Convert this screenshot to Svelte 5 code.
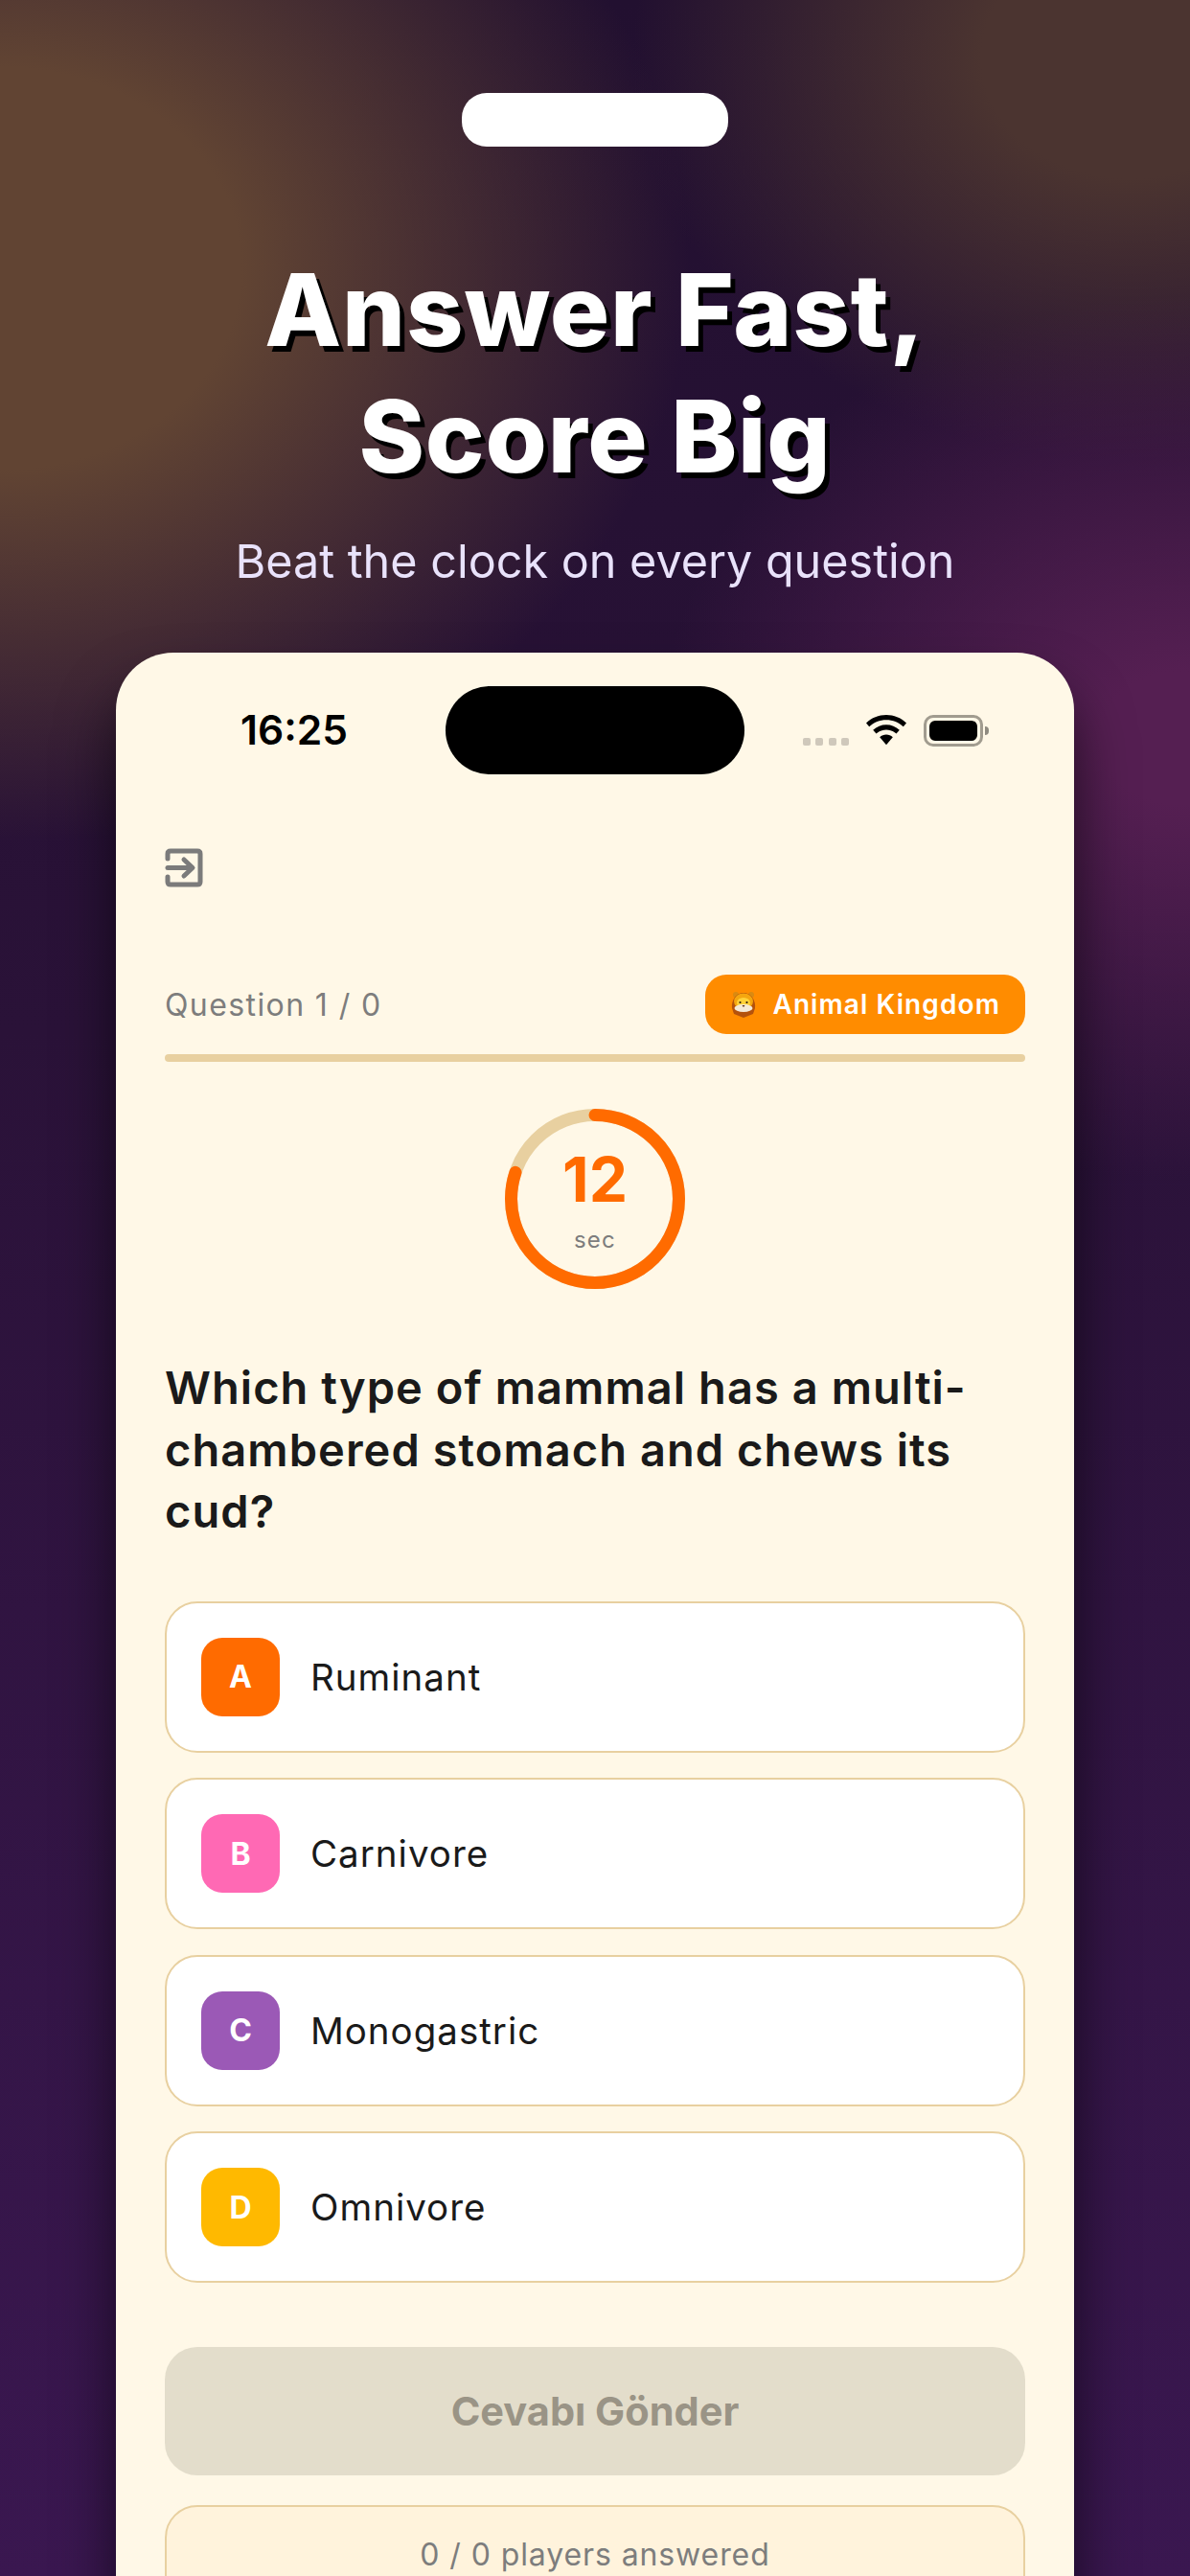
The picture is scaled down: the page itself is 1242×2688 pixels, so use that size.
<script>
  const options = [
    { letter: 'A', label: 'Ruminant', color: '#ff6b00' },
    { letter: 'B', label: 'Carnivore', color: '#ff69b4' },
    { letter: 'C', label: 'Monogastric', color: '#9b59b6' },
    { letter: 'D', label: 'Omnivore', color: '#ffb900' }
  ];

  // timer ring: 12 of 15 seconds left
  const radius = 87.5;
  const circumference = 2 * Math.PI * radius;
  const dash = (12 / 15) * circumference;
</script>

<div class="page">
  <div class="pill"></div>

  <h1 class="title">Answer Fast,<br />Score Big</h1>
  <p class="subtitle">Beat the clock on every question</p>

  <div class="phone">
    <div class="status-bar">
      <span class="time">16:25</span>
      <div class="island"></div>
      <div class="status-icons">
        <div class="signal">
          <span></span><span></span><span></span><span></span>
        </div>
        <svg class="wifi" viewBox="0 0 42 32" width="42" height="32" aria-hidden="true">
          <path d="M21 0C13 0 5.800 3 0 8.400L3.200 12.200C8 7.800 14.200 5.200 21 5.200S34 7.800 38.800 12.200L42 8.400C36.200 3 29 0 21 0Z" fill="#000" />
          <path d="M21 10.200C15.800 10.200 11 12.200 7.200 15.800L10.500 19.600C13.300 17 17 15.400 21 15.400S28.700 17 31.500 19.600L34.800 15.800C31 12.200 26.200 10.200 21 10.200Z" fill="#000" />
          <path d="M21 20.400C18.400 20.400 16 21.400 14.200 23.200L21 31.200L27.800 23.200C26 21.400 23.600 20.400 21 20.400Z" fill="#000" />
        </svg>
        <div class="battery">
          <div class="battery-body"><div class="battery-fill"></div></div>
          <div class="battery-cap"></div>
        </div>
      </div>
    </div>

    <div class="content">
      <svg class="exit" viewBox="0 0 40 41" width="40" height="41" fill="none" stroke="#7b7b7b" stroke-width="5" stroke-linecap="round" stroke-linejoin="round" aria-hidden="true">
        <path d="M3 11V6Q3 3 6 3H34Q37 3 37 6V35Q37 38 34 38H6Q3 38 3 35V30" />
        <path d="M3 20.500H27" />
        <path d="M20 12L29 20.500L20 29" />
      </svg>

      <div class="progress-head">
        <span class="progress-label">Question 1 / 0</span>
        <span class="chip">
          <svg class="lion" viewBox="0 0 26 28" width="26" height="28" aria-hidden="true">
            <circle cx="5" cy="4" r="3" fill="#d98a12" />
            <circle cx="21" cy="4" r="3" fill="#d98a12" />
            <path d="M13 28L8 26L3 24L1 18C0 10 5 2 13 2S26 10 25 18L23 24L18 26Z" fill="#b4520c" />
            <ellipse cx="13" cy="11" rx="10" ry="8.500" fill="#f5a60f" />
            <ellipse cx="13" cy="12.500" rx="7" ry="5.500" fill="#ffd23a" />
            <ellipse cx="13" cy="18" rx="9.500" ry="4" fill="#f4ead8" />
            <circle cx="9.500" cy="12" r="1.100" fill="#2b1a10" />
            <circle cx="16.500" cy="12" r="1.100" fill="#2b1a10" />
            <path d="M11.500 15H14.500L13 17Z" fill="#5a2d14" />
          </svg>
          Animal Kingdom
        </span>
      </div>
      <div class="progress-track"></div>

      <div class="timer">
        <svg viewBox="0 0 188 188" width="188" height="188" fill="none" aria-hidden="true">
          <circle cx="94" cy="94" r={radius} stroke="#e8d0a0" stroke-width="13" />
          <circle
            cx="94"
            cy="94"
            r={radius}
            stroke="#ff6b00"
            stroke-width="13"
            stroke-linecap="round"
            stroke-dasharray="{dash} {circumference}"
            transform="rotate(-90 94 94)"
          />
        </svg>
        <div class="timer-text">
          <span class="seconds">12</span>
          <span class="sec">sec</span>
        </div>
      </div>

      <h2 class="question">Which type of mammal has a multi-chambered stomach and chews its cud?</h2>

      <div class="options">
        {#each options as option}
          <div class="option">
            <span class="letter" style="background: {option.color}">{option.letter}</span>
            <span class="option-label">{option.label}</span>
          </div>
        {/each}
      </div>

      <div class="submit">Cevabı Gönder</div>

      <div class="answered">0 / 0 players answered</div>
    </div>
  </div>
</div>

<style>
  :global(body) {
    margin: 0;
  }

  .page {
    width: 1242px;
    height: 2688px;
    overflow: hidden;
    display: flex;
    flex-direction: column;
    align-items: center;
    padding-top: 97px;
    box-sizing: border-box;
    font-family: Inter, "Liberation Sans", sans-serif;
    background:
      radial-gradient(ellipse 540px 460px at 1230px 770px, #551f52 0%, #551f52 15%, rgba(85, 31, 82, 0) 100%),
      radial-gradient(ellipse 720px 600px at 0 280px, #614433 0%, #614433 35%, rgba(97, 68, 51, 0) 100%),
      radial-gradient(ellipse 520px 420px at 1180px 60px, #4b3430 0%, #4b3430 30%, rgba(75, 52, 48, 0) 100%),
      linear-gradient(180deg, #221030 0%, #2a1238 40%, #3a1750 100%);
  }

  .pill {
    width: 278px;
    height: 56px;
    border-radius: 26px;
    background: #fff;
    flex-shrink: 0;
  }

  .title {
    margin: 104px 0 0;
    font-size: 104px;
    line-height: 132px;
    font-weight: 800;
    letter-spacing: 0.8px;
    color: #fff;
    text-align: center;
    text-shadow: 5px 6px 0 #000;
  }

  .subtitle {
    margin: 33px 0 0;
    font-size: 48.500px;
    line-height: 64px;
    font-weight: 400;
    color: #e9e2fb;
    text-align: center;
  }

  .phone {
    margin-top: 63px;
    width: 1000px;
    flex-shrink: 0;
    background: #fff8e7;
    border-radius: 60px 60px 0 0;
    box-shadow: 0 40px 60px rgba(0, 0, 0, 0.6);
  }

  .status-bar {
    display: flex;
    align-items: flex-start;
    height: 127px;
    padding-top: 35px;
    box-sizing: border-box;
    position: relative;
  }

  .time {
    margin: 21px 0 0 130px;
    font-size: 42.500px;
    line-height: 50px;
    font-weight: 600;
    color: #000;
  }

  .island {
    flex-shrink: 0;
    margin-left: 102px;
    width: 312px;
    height: 92px;
    border-radius: 46px;
    background: #000;
  }

  .status-icons {
    margin: 30px 0 0 61px;
    display: flex;
    align-items: flex-start;
  }

  .signal {
    display: flex;
    gap: 5.300px;
    margin-top: 24px;
  }

  .signal span {
    width: 8px;
    height: 8px;
    border-radius: 2px;
    background: #cfc8bb;
  }

  .wifi {
    margin-left: 18px;
  }

  .battery {
    display: flex;
    align-items: center;
    margin-left: 18px;
  }

  .battery-body {
    width: 62px;
    height: 33px;
    box-sizing: border-box;
    border: 3px solid #a19c8f;
    border-radius: 10px;
    padding: 3px;
  }

  .battery-fill {
    height: 100%;
    background: #000;
    border-radius: 6px;
  }

  .battery-cap {
    margin-left: 2px;
    width: 4px;
    height: 9px;
    background: #8f8b80;
    border-radius: 0 5px 5px 0;
  }

  .content {
    padding: 77px 51px 0;
    display: flex;
    flex-direction: column;
  }

  .exit {
    display: block;
    margin-bottom: 91px;
    flex-shrink: 0;
  }

  .progress-head {
    display: flex;
    justify-content: space-between;
    align-items: center;
  }

  .progress-label {
    font-size: 32px;
    letter-spacing: 1.400px;
    color: #7d7d7d;
  }

  .chip {
    display: inline-flex;
    align-items: center;
    gap: 17px;
    height: 62px;
    padding: 0 26px 0 27px;
    border-radius: 22px;
    background: #ff8c00;
    color: #fff;
    font-size: 28px;
    font-weight: 600;
    letter-spacing: 1.100px;
  }

  .progress-track {
    margin-top: 21px;
    height: 8px;
    border-radius: 4px;
    background: #e8d0a0;
  }

  .timer {
    position: relative;
    width: 188px;
    height: 188px;
    margin: 49px auto 0;
  }

  .timer svg {
    display: block;
  }

  .timer-text {
    position: absolute;
    inset: 0;
    display: flex;
    flex-direction: column;
    align-items: center;
  }

  .seconds {
    margin-top: 39px;
    font-size: 64px;
    line-height: 70px;
    font-weight: 700;
    color: #ff6b00;
  }

  .sec {
    margin-top: 14px;
    font-size: 24px;
    line-height: 28px;
    letter-spacing: 1.200px;
    color: #7d7d7d;
  }

  .question {
    margin: 71px 0 0;
    font-size: 47px;
    line-height: 64.500px;
    font-weight: 600;
    letter-spacing: 1.050px;
    color: #1a1a1a;
  }

  .options {
    margin-top: 61px;
    display: flex;
    flex-direction: column;
    gap: 26.500px;
  }

  .option {
    display: flex;
    align-items: center;
    gap: 32px;
    height: 158px;
    box-sizing: border-box;
    padding: 0 36px;
    border: 2.500px solid #e8d0a0;
    border-radius: 34px;
    background: #fff;
  }

  .letter {
    width: 82px;
    height: 82px;
    border-radius: 22px;
    display: flex;
    align-items: center;
    justify-content: center;
    color: #fff;
    font-size: 32px;
    font-weight: 700;
  }

  .option-label {
    font-size: 38.500px;
    letter-spacing: 1px;
    color: #1a1a1a;
  }

  .submit {
    margin-top: 67px;
    height: 134px;
    border-radius: 34px;
    background: #e3ddcb;
    display: flex;
    align-items: center;
    justify-content: center;
    font-size: 41.500px;
    font-weight: 700;
    color: #9a9486;
  }

  .answered {
    margin-top: 31px;
    height: 130px;
    box-sizing: border-box;
    padding-top: 30px;
    border: 2.500px solid #e8d0a0;
    border-radius: 34px;
    background: #fff3dc;
    text-align: center;
    font-size: 32px;
    letter-spacing: 0.9px;
    color: #7d7d7d;
  }
</style>
